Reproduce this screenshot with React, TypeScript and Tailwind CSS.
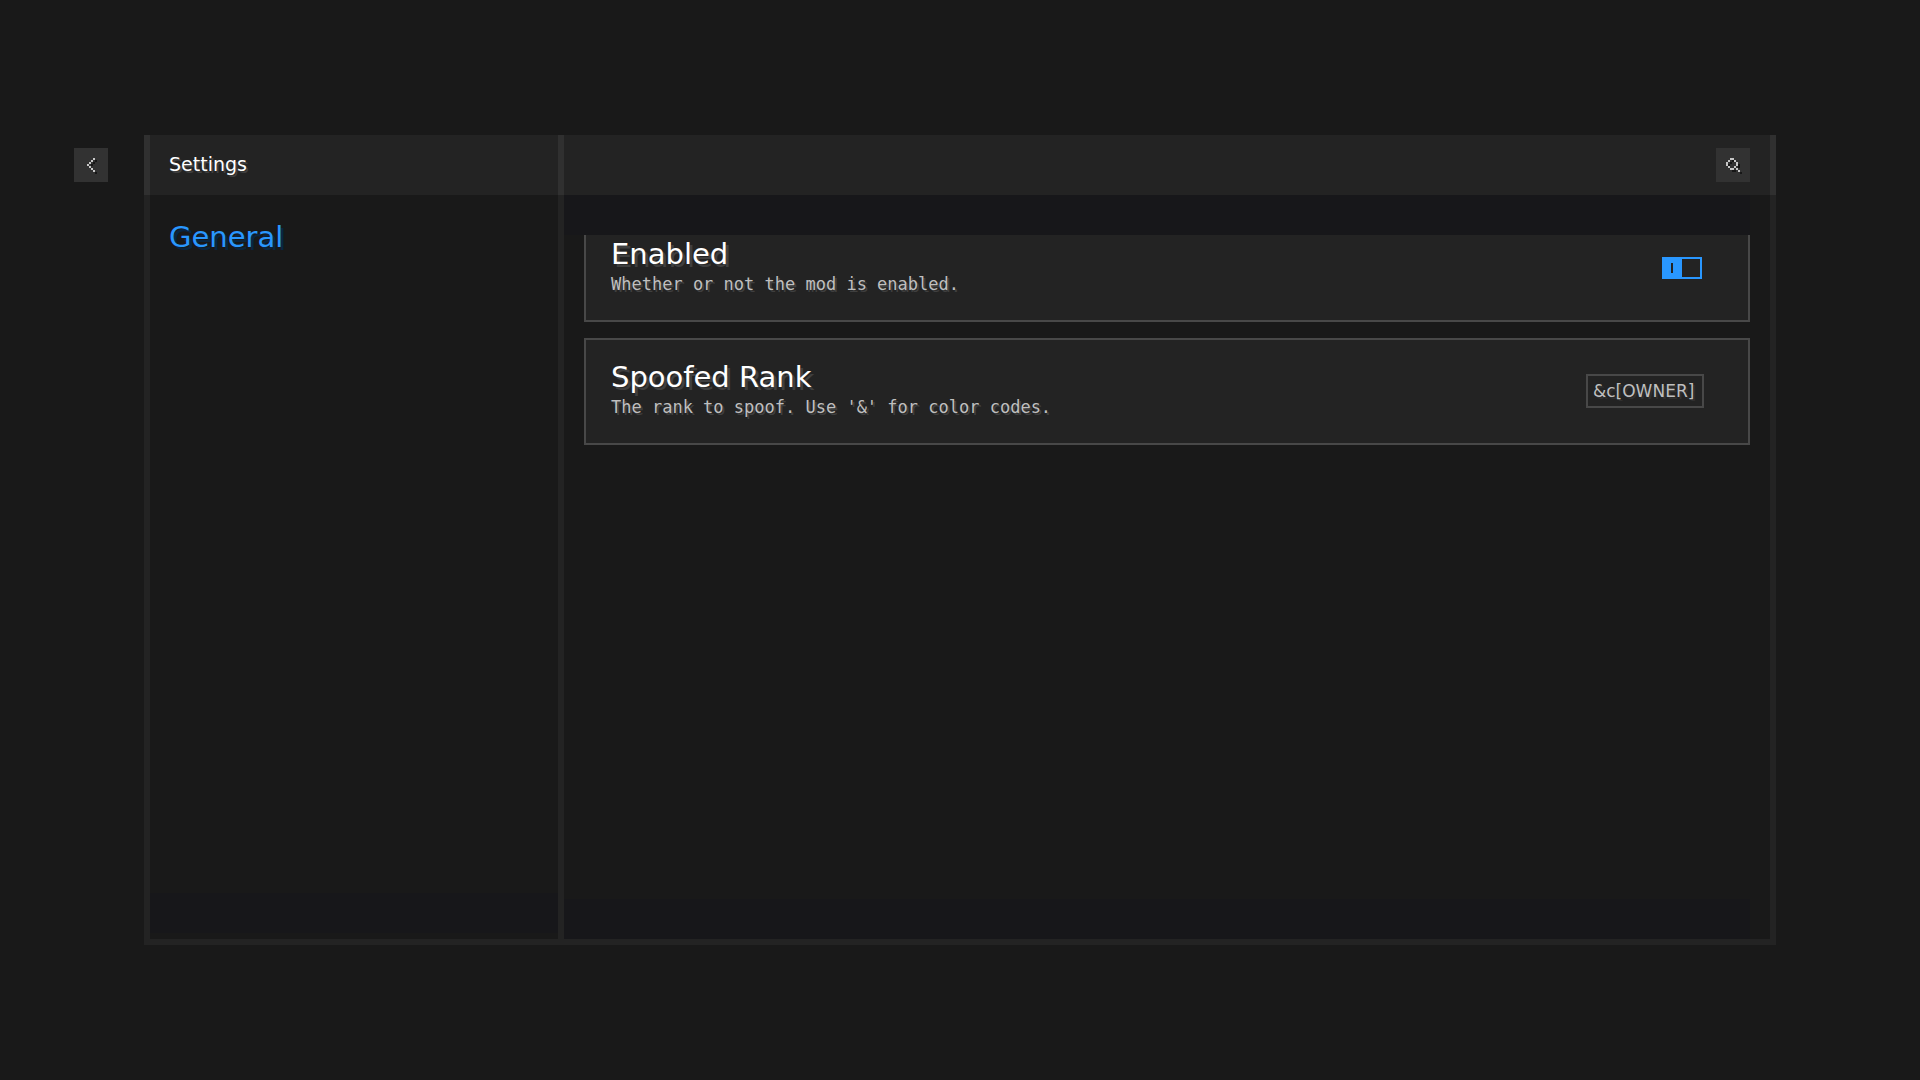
import type { ReactNode } from 'react';

const LIGHT = '#c6c6c6';
const DARK = '#161616';

function PixelIcon({ cells, cols, rows }: { cells: [number, number][]; cols: number; rows: number }) {
  return (
    <svg width={cols * 2} height={rows * 2} viewBox={`0 0 ${cols} ${rows}`} shapeRendering="crispEdges" aria-hidden="true">
      {cells.map(([x, y]) => (
        <rect key={`s${x}-${y}`} x={x + 1} y={y + 1} width={1} height={1} fill={DARK} />
      ))}
      {cells.map(([x, y]) => (
        <rect key={`c${x}-${y}`} x={x} y={y} width={1} height={1} fill={LIGHT} />
      ))}
    </svg>
  );
}

const chevron: [number, number][] = [[3, 0], [2, 1], [1, 2], [0, 3], [1, 4], [2, 5], [3, 6]];
const lens: [number, number][] = [
  [2, 0], [3, 0], [1, 1], [4, 1], [0, 2], [5, 2], [0, 3], [5, 3], [1, 4], [4, 4], [2, 5], [3, 5], [5, 5], [6, 6],
];

function Card({ title, text, id, children }: { title: string; text: string; id: string; children: ReactNode }) {
  return (
    <div className="flex h-[107px] shrink-0 items-center justify-between border-2 border-[#484848] bg-[#232323] pb-px pl-[25px] pr-11">
      <div className="flex flex-col gap-0.5 pb-0.5">
        <label htmlFor={id} className="text-[29px] leading-8 text-white [text-shadow:3px_3px_0_#3f3f3f]">{title}</label>
        <p className="font-['DejaVu_Sans_Mono',monospace] text-[17px] leading-6 text-[#bfbfbf] [text-shadow:2px_2px_0_#3f3f3f]">{text}</p>
      </div>
      {children}
    </div>
  );
}

export default function App() {
  return (
    <div className="flex min-h-screen items-start bg-[#191919] pl-[74px] pr-36 pt-[135px] font-['DejaVu_Sans',sans-serif]">
      <button aria-label="Back" className="mr-9 mt-[13px] flex size-[34px] shrink-0 items-center justify-center bg-[#323232] pl-0.5 pt-0.5">
        <PixelIcon cells={chevron} cols={5} rows={8} />
      </button>
      <main className="flex h-[75vh] min-w-0 flex-1 flex-col">
        <header className="flex h-15 shrink-0 border-x-6 border-[#303030] bg-[#232323]">
          <div className="flex w-[414px] shrink-0 items-center border-r-6 border-[#303030] pb-0.5 pl-[19px]">
            <h1 className="text-[19px] leading-6 text-white [text-shadow:2px_2px_0_#3f3f3f]">Settings</h1>
          </div>
          <div className="flex flex-1 items-center justify-end pr-5">
            <button aria-label="Search" className="flex size-[34px] items-center justify-center bg-[#323232] pl-0.5 pt-0.5">
              <PixelIcon cells={lens} cols={8} rows={8} />
            </button>
          </div>
        </header>
        <div className="flex min-h-0 flex-1 border-x-6 border-b-6 border-[#232323]">
          <nav className="flex w-[414px] shrink-0 flex-col border-r-6 border-[#232323] pb-1.5">
            <a href="#general" className="mt-6 pl-[19px] text-[29px] leading-9 text-[#2997ff] [text-shadow:3px_3px_0_#0a2540]">General</a>
            <div className="mt-auto h-10 bg-[#17171a]" />
          </nav>
          <section id="general" className="mr-5 flex min-w-0 flex-1 flex-col">
            <div className="h-10 shrink-0 bg-[#17171a]" />
            <div className="min-h-0 flex-1 overflow-hidden pl-5">
              <div className="-mt-5 flex flex-col gap-4">
                <Card id="enabled" title="Enabled" text="Whether or not the mod is enabled.">
                  <button id="enabled" role="switch" aria-checked="true" className="mr-0.5 flex h-[22px] w-10 border-2 border-[#2997ff]">
                    <span className="flex h-full w-[18px] items-center justify-center bg-[#2997ff] pr-0.5">
                      <span className="h-2.5 w-0.5 bg-[#232323]" />
                    </span>
                  </button>
                </Card>
                <Card id="rank" title="Spoofed Rank" text="The rank to spoof. Use '&' for color codes.">
                  <input id="rank" type="text" defaultValue="&c[OWNER]" className="h-[34px] w-[118px] border-2 border-[#484848] bg-transparent px-[5px] text-[17px] text-[#bfbfbf] outline-none [text-shadow:2px_2px_0_#303030]" />
                </Card>
              </div>
            </div>
            <div className="h-10 shrink-0 bg-[#17171a]" />
          </section>
        </div>
      </main>
    </div>
  );
}
